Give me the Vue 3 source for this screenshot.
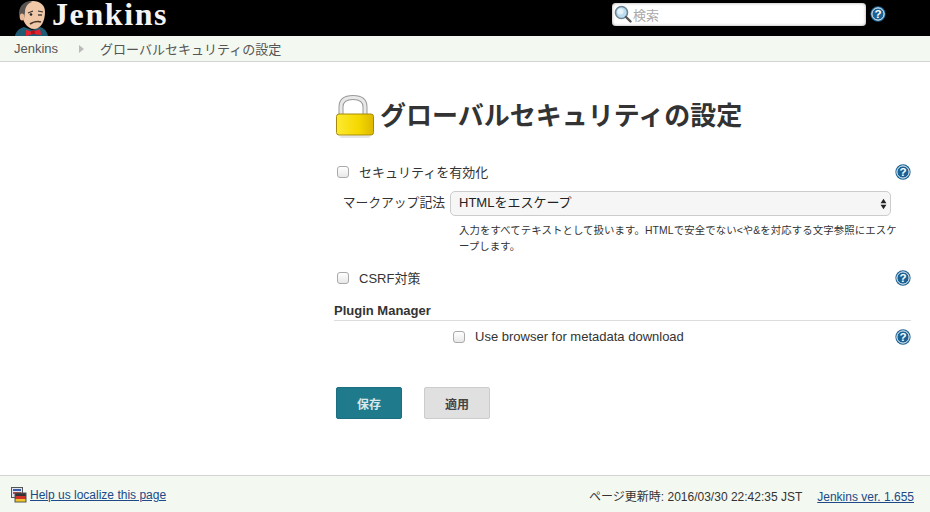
<script setup>
const searchHint = '検索'
</script>

<template>
  <div class="page">
    <header class="header">
      <div class="brand">
        <svg class="butler" viewBox="0 0 36 36" width="36" height="36">
          <path d="M1 36c1-5 5-8 9-9l8 3 8-3c4 1 7 4 8 9z" fill="#1f5a73" />
          <path d="M7 11C8 5 13 1 19 1c7 0 12 4 12 11 0 9-4 17-11 17-7 0-12-8-13-18z" fill="#f0c8a8" />
          <path d="M7 20C3 14 5 5 12 2c3-1 5-1 6 0-4 1-7 5-7 10l-1 7z" fill="#59544f" />
          <ellipse cx="8" cy="17" rx="2.2" ry="3.4" fill="#e8b898" />
          <path d="M14 13l5-2M24 11l5 1" stroke="#333" stroke-width="1.2" fill="none" />
          <circle cx="17" cy="14.5" r="1.3" fill="#222" />
          <path d="M24 15h4" stroke="#222" stroke-width="1.2" />
          <path d="M16 24c3-2 8-3 11-2" stroke="#4a3428" stroke-width="1.8" fill="none" />
          <path d="M12 30l7 2 7-3 1 6-8-1-7 2z" fill="#e8202a" />
          <rect x="17" y="30.5" width="4" height="3.5" fill="#b8101a" />
        </svg>
        <span class="brand-name">Jenkins</span>
      </div>
      <div class="search">
        <div class="search-box">
          <svg class="glass" viewBox="0 0 18 18" width="18" height="18">
            <circle cx="7.5" cy="7.5" r="6" fill="#bcdcf0" stroke="#6d8594" stroke-width="1.6" />
            <circle cx="6.5" cy="6.5" r="3" fill="#e4f3fb" />
            <path d="M12 12l4.5 4.5" stroke="#555" stroke-width="2.4" stroke-linecap="round" />
          </svg>
          <span>{{ searchHint }}</span>
        </div>
        <svg class="help-icon" viewBox="0 0 18 18" width="16" height="16">
          <circle cx="9" cy="9" r="8.6" fill="#1b6193" />
          <circle cx="9" cy="9" r="6.9" fill="#1b6193" stroke="#fff" stroke-width="1.1" />
          <text x="9" y="13.6" text-anchor="middle" class="q">?</text>
        </svg>
      </div>
    </header>

    <nav class="crumbs">
      <span>Jenkins</span>
      <i class="arrow"></i>
      <span>グローバルセキュリティの設定</span>
    </nav>

    <main class="main">
      <h1 class="title">
        <svg viewBox="0 0 40 44" width="40" height="44">
          <ellipse cx="20" cy="43" rx="16" ry="1.6" fill="#e6e6e6" />
          <path d="M6 21V13C6 6 11 3.5 18 3.5S30 6 30 13v8" fill="none" stroke="#9a9a9a" stroke-width="5" />
          <path d="M6 21V13C6 6 11 3.5 18 3.5S30 6 30 13v8" fill="none" stroke="#e8e8e8" stroke-width="3" />
          <defs>
            <linearGradient id="lockFill" x1="0" x2="1" y1="0" y2="0">
              <stop offset="0" stop-color="#fdea30" />
              <stop offset="0.6" stop-color="#f5d800" />
              <stop offset="1" stop-color="#dcb800" />
            </linearGradient>
          </defs>
          <rect x="1.5" y="20" width="37" height="21" rx="2.5" fill="url(#lockFill)" stroke="#a68a10" />
        </svg>
        <span>グローバルセキュリティの設定</span>
      </h1>

      <div class="row first">
        <label class="check"><i class="box"></i><span>セキュリティを有効化</span></label>
        <svg class="help-icon" viewBox="0 0 18 18" width="16" height="16">
          <circle cx="9" cy="9" r="8.6" fill="#1b6193" />
          <circle cx="9" cy="9" r="6.9" fill="#1b6193" stroke="#fff" stroke-width="1.1" />
          <text x="9" y="13.6" text-anchor="middle" class="q">?</text>
        </svg>
      </div>

      <div class="markup">
        <label class="markup-label">マークアップ記法</label>
        <div class="select">
          <span>HTMLをエスケープ</span>
          <svg viewBox="0 0 8 14" width="7" height="12">
            <path d="M4 1l3.4 5H.6zM4 13L.6 8h6.8z" fill="#222" />
          </svg>
        </div>
      </div>
      <p class="hint">入力をすべてテキストとして扱います。HTMLで安全でない&lt;や&amp;を対応する文字参照にエスケ<br>ープします。</p>

      <div class="row csrf">
        <label class="check"><i class="box"></i><span>CSRF対策</span></label>
        <svg class="help-icon" viewBox="0 0 18 18" width="16" height="16">
          <circle cx="9" cy="9" r="8.6" fill="#1b6193" />
          <circle cx="9" cy="9" r="6.9" fill="#1b6193" stroke="#fff" stroke-width="1.1" />
          <text x="9" y="13.6" text-anchor="middle" class="q">?</text>
        </svg>
      </div>

      <h2 class="group">Plugin Manager</h2>

      <div class="row plugin">
        <label class="check"><i class="box"></i><span>Use browser for metadata download</span></label>
        <svg class="help-icon" viewBox="0 0 18 18" width="16" height="16">
          <circle cx="9" cy="9" r="8.6" fill="#1b6193" />
          <circle cx="9" cy="9" r="6.9" fill="#1b6193" stroke="#fff" stroke-width="1.1" />
          <text x="9" y="13.6" text-anchor="middle" class="q">?</text>
        </svg>
      </div>

      <div class="buttons">
        <button class="btn primary">保存</button>
        <button class="btn">適用</button>
      </div>
    </main>

    <footer class="footer">
      <div class="localize">
        <svg viewBox="0 0 16 16" width="16" height="16">
          <rect x="0.5" y="0.5" width="11" height="10" fill="#dfe6f2" stroke="#555" />
          <rect x="2" y="2" width="8" height="2" fill="#3a5fa8" />
          <rect x="2" y="5" width="8" height="2" fill="#d8414a" />
          <rect x="4" y="6" width="11" height="9" fill="#333" stroke="#555" />
          <rect x="4.5" y="9" width="10" height="3" fill="#d0302a" />
          <rect x="4.5" y="12" width="10" height="2.6" fill="#eec52a" />
        </svg>
        <a class="help-link">Help us localize this page</a>
      </div>
      <div class="meta">
        <span>ページ更新時: 2016/03/30 22:42:35 JST</span>
        <a>Jenkins ver. 1.655</a>
      </div>
    </footer>
  </div>
</template>

<style scoped>
.page {
  height: 512px;
  display: flex;
  flex-direction: column;
  font-family: "Liberation Sans", "Noto Sans CJK JP", sans-serif;
  font-size: 13px;
  color: #333;
  background: #fff;
}

.header {
  height: 36px;
  background: #000;
  display: flex;
  justify-content: space-between;
  padding-left: 14px;
  padding-right: 44px;
}
.brand {
  display: flex;
  align-items: flex-start;
}
.butler {
  margin-right: 2px;
}
.brand-name {
  font-family: "Liberation Serif", serif;
  font-weight: 700;
  font-size: 32px;
  line-height: 28px;
  letter-spacing: 1.6px;
  color: #f4f4f4;
}
.search {
  display: flex;
  align-items: center;
  height: 28px;
  gap: 4px;
}
.search-box {
  width: 252px;
  height: 23px;
  background: #fff;
  border-radius: 4px;
  box-shadow: inset 0 0 3px #999;
  display: flex;
  align-items: center;
  gap: 1px;
  padding-left: 2px;
  color: #aaa;
  font-size: 13px;
}
.q {
  font-family: "Liberation Sans", sans-serif;
  font-size: 13px;
  font-weight: 700;
  fill: #fff;
}

.crumbs {
  height: 25px;
  background: #f3f8f1;
  border-bottom: 1px solid #d3d3d3;
  display: flex;
  align-items: center;
  padding-left: 14px;
  color: #555;
  font-size: 13px;
}
.arrow {
  width: 0;
  height: 0;
  margin: 0 16px 0 21px;
  border-left: 5px solid #bbb;
  border-top: 4px solid transparent;
  border-bottom: 4px solid transparent;
}

.main {
  flex: 1;
  padding: 0 19px 0 334px;
  min-height: 0;
}
.title {
  margin: 32px 0 0 1px;
  height: 44px;
  display: flex;
  align-items: center;
  gap: 5px;
  font-size: 26px;
  font-weight: 700;
  color: #333;
  line-height: 44px;
}
.row {
  display: flex;
  justify-content: space-between;
  align-items: center;
  height: 20px;
}
.check {
  display: flex;
  align-items: center;
  gap: 10px;
  padding-left: 3px;
}
.check span {
  position: relative;
  top: -1px;
}
.box {
  width: 10px;
  height: 10px;
  border: 1px solid #aaa;
  border-radius: 3px;
  background: linear-gradient(#fff, #e8e8e8);
}
.first {
  margin-top: 24px;
}
.markup {
  display: flex;
  align-items: center;
  margin-top: 9px;
  gap: 5px;
}
.markup-label {
  width: 111px;
  text-align: right;
  font-size: 12.8px;
  position: relative;
  top: -2px;
}
.select {
  flex: 1;
  height: 23px;
  margin-right: 20px;
  border: 1px solid #ccc;
  border-radius: 5px;
  background: #f6f6f6;
  display: flex;
  align-items: center;
  justify-content: space-between;
  padding: 0 3px 0 8px;
  color: #222;
}
.select span {
  padding-bottom: 5px;
}
.hint {
  margin: 7px 0 0 125px;
  font-size: 10.4px;
  letter-spacing: 0.1px;
  line-height: 16px;
  color: #333;
  white-space: nowrap;
}
.csrf {
  margin-top: 13px;
}
.group {
  margin: 13px 0 0;
  height: 19px;
  line-height: 19px;
  border-bottom: 1px solid #ddd;
  font-size: 13px;
  font-weight: 700;
  color: #333;
}
.plugin {
  margin-top: 6px;
}
.plugin .check {
  padding-left: 119px;
}
.buttons {
  display: flex;
  gap: 22px;
  margin-top: 40px;
  padding-left: 2px;
}
.btn {
  width: 66px;
  height: 32px;
  border: 1px solid #ccc;
  border-radius: 2px;
  background: #e0e0e0;
  color: #444;
  font-family: inherit;
  font-size: 12px;
  font-weight: 700;
}
.primary {
  background: #1f7a8c;
  border-color: #1c6f80;
  color: #d8e8ec;
}

.footer {
  height: 34px;
  background: #f3f8f1;
  border-top: 1px solid #d3d3d3;
  display: flex;
  align-items: center;
  justify-content: space-between;
  padding: 2px 16px 0 11px;
  font-size: 12px;
}
.localize {
  display: flex;
  align-items: center;
}
.footer a {
  color: #204a87;
  text-decoration: underline;
}
.help-link {
  margin-left: 3px;
}
.meta {
  display: flex;
  align-items: baseline;
  gap: 15px;
}
</style>
